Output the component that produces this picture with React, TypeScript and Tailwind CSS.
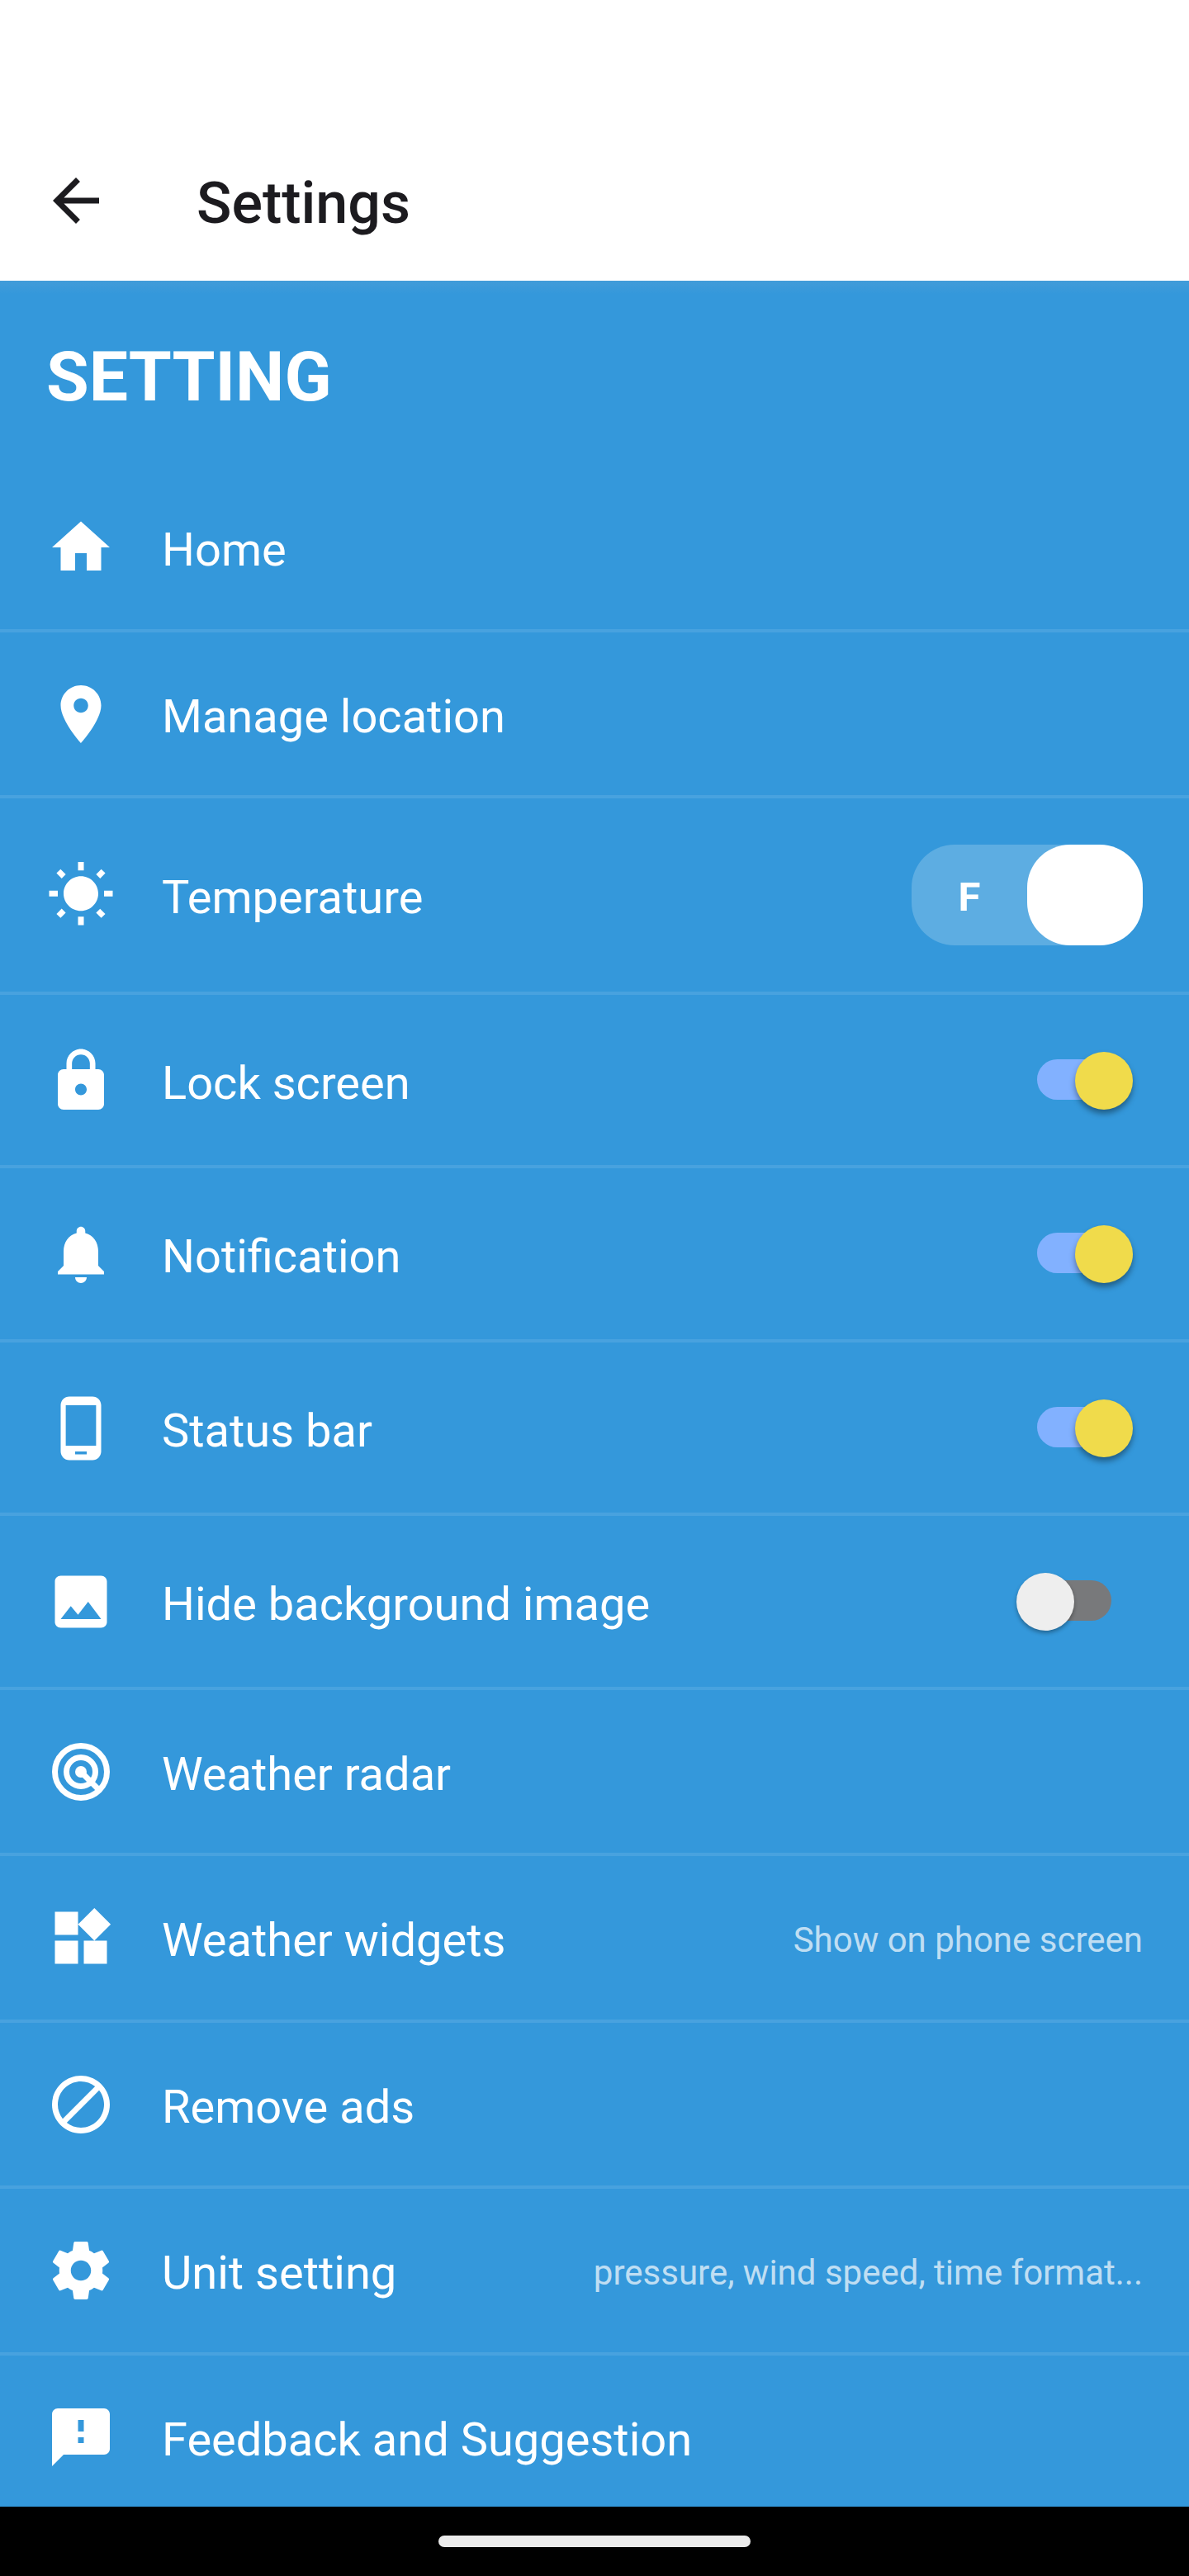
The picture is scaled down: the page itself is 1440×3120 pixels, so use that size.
import type { ReactNode } from "react";

type RowProps = {
  icon: ReactNode;
  label: string;
  height: string;
  iconTop?: string;
  children?: ReactNode;
  divider?: boolean;
};

function Glyph({ d }: { d: string }) {
  return (
    <svg viewBox="0 0 24 24" className="h-[84px] w-[84px] shrink-0 fill-white">
      <path d={d} />
    </svg>
  );
}

function Row({ icon, label, height, iconTop = "pt-[57px]", children, divider = true }: RowProps) {
  return (
    <li
      className={`flex shrink-0 items-start px-14 ${height} ${iconTop} ${
        divider ? "border-b-4 border-[#48a2df]" : ""
      }`}
    >
      {icon}
      <span className="ml-14 mt-[3px] whitespace-nowrap text-[56px] leading-[84px]">{label}</span>
      <div className="ml-auto">{children}</div>
    </li>
  );
}

function Hint({ children }: { children: ReactNode }) {
  return (
    <span className="mt-[3px] block whitespace-nowrap text-[42px] leading-[84px] text-white/70">
      {children}
    </span>
  );
}

function Toggle({ on = false }: { on?: boolean }) {
  return (
    <div
      className={`relative mr-[38px] mt-4 h-[49px] w-[90px] rounded-full ${
        on ? "bg-[#82b1ff]" : "bg-[#78797b]"
      }`}
    >
      <div
        className={`absolute top-[-9.5px] h-[70px] w-[70px] rounded-full ${
          on
            ? "left-[46px] bg-[#f0db4b] shadow-[0_5px_7px_rgba(0,0,0,0.38)]"
            : "left-[-25px] bg-[#eeeeee] shadow-[0_3px_5px_rgba(0,0,0,0.32)]"
        }`}
      />
    </div>
  );
}

function UnitToggle() {
  return (
    <div className="-mt-[19px] flex h-[122px] w-[280px] rounded-[52px] bg-[#5dade2]">
      <span className="flex-1 pt-[3px] text-center text-[49px] font-bold leading-[122px]">F</span>
      <span className="w-[140px] rounded-[52px] bg-white" />
    </div>
  );
}

const paths = {
  back: "M20 11H7.83l5.59-5.59L12 4l-8 8 8 8 1.41-1.41L7.83 13H20v-2z",
  home: "M10 20v-6h4v6h5v-8h3L12 3 2 12h3v8z",
  place:
    "M12 2C8.13 2 5 5.13 5 9c0 5.25 7 13 7 13s7-7.75 7-13c0-3.87-3.13-7-7-7zm0 9.5c-1.38 0-2.5-1.12-2.5-2.5s1.12-2.5 2.5-2.5 2.5 1.12 2.5 2.5-1.12 2.5-2.5 2.5z",
  sun: "M6.76 4.84l-1.8-1.79-1.41 1.41 1.79 1.79 1.42-1.41zM4 10.5H1v2h3v-2zm9-9.95h-2V3.5h2V.55zm7.45 3.91l-1.41-1.41-1.79 1.79 1.41 1.41 1.79-1.79zm-3.21 13.7l1.79 1.8 1.41-1.41-1.8-1.79-1.4 1.4zM20 10.5v2h3v-2h-3zm-8-5c-3.31 0-6 2.69-6 6s2.69 6 6 6 6-2.69 6-6-2.69-6-6-6zm-1 16.95h2V19.5h-2v2.95zm-7.45-3.91l1.41 1.41 1.79-1.8-1.41-1.41-1.79 1.8z",
  lock: "M18 8h-1V6c0-2.76-2.24-5-5-5S7 3.24 7 6v2H6c-1.1 0-2 .9-2 2v10c0 1.1.9 2 2 2h12c1.1 0 2-.9 2-2V10c0-1.1-.9-2-2-2zm-6 9c-1.1 0-2-.9-2-2s.9-2 2-2 2 .9 2 2-.9 2-2 2zm3.1-9H8.9V6c0-1.71 1.39-3.1 3.1-3.1 1.71 0 3.1 1.39 3.1 3.1v2z",
  bell: "M12 22c1.1 0 2-.9 2-2h-4c0 1.1.89 2 2 2zm6-6v-5c0-3.07-1.64-5.64-4.5-6.32V4c0-.83-.67-1.5-1.5-1.5s-1.5.67-1.5 1.5v.68C7.63 5.36 6 7.92 6 11v5l-2 2v1h16v-1l-2-2z",
  phone:
    "M16 1H8C6.34 1 5 2.34 5 4v16c0 1.66 1.34 3 3 3h8c1.66 0 3-1.34 3-3V4c0-1.66-1.34-3-3-3zm-2 20h-4v-1h4v1zm3.25-3H6.75V4h10.5v14z",
  image:
    "M21 19V5c0-1.1-.9-2-2-2H5c-1.1 0-2 .9-2 2v14c0 1.1.9 2 2 2h14c1.1 0 2-.9 2-2zM8.5 13.5l2.5 3.01L14.5 12l4.5 6H5l3.5-4.5z",
  widgets:
    "M13 13v8h8v-8h-8zM3 21h8v-8H3v8zM3 3v8h8V3H3zm13.66-1.31L11 7.34 16.66 13l5.66-5.66-5.66-5.65z",
  block:
    "M12 2C6.5 2 2 6.5 2 12s4.5 10 10 10 10-4.5 10-10S17.5 2 12 2zM4 12c0-4.4 3.6-8 8-8 1.8 0 3.5.6 4.9 1.7L5.7 16.9C4.6 15.5 4 13.8 4 12zm8 8c-1.8 0-3.5-.6-4.9-1.7L18.3 7.1C19.4 8.5 20 10.2 20 12c0 4.4-3.6 8-8 8z",
  gear: "M19.43 12.98c.04-.32.07-.64.07-.98s-.03-.66-.07-.98l2.11-1.65c.19-.15.24-.42.12-.64l-2-3.46c-.12-.22-.39-.3-.61-.22l-2.49 1c-.52-.4-1.08-.73-1.69-.98l-.38-2.65C14.46 2.18 14.25 2 14 2h-4c-.25 0-.46.18-.49.42l-.38 2.65c-.61.25-1.17.59-1.69.98l-2.49-1c-.23-.09-.49 0-.61.22l-2 3.46c-.13.22-.07.49.12.64l2.11 1.65c-.04.32-.07.65-.07.98s.03.66.07.98l-2.11 1.65c-.19.15-.24.42-.12.64l2 3.46c.12.22.39.3.61.22l2.49-1c.52.4 1.08.73 1.69.98l.38 2.65c.03.24.24.42.49.42h4c.25 0 .46-.18.49-.42l.38-2.65c.61-.25 1.17-.59 1.69-.98l2.49 1c.23.09.49 0 .61-.22l2-3.46c.12-.22.07-.49-.12-.64l-2.11-1.65zM12 15.5c-1.93 0-3.5-1.57-3.5-3.5s1.57-3.5 3.5-3.5 3.5 1.57 3.5 3.5-1.57 3.5-3.5 3.5z",
  feedback:
    "M20 2H4c-1.1 0-1.99.9-1.99 2L2 22l4-4h14c1.1 0 2-.9 2-2V4c0-1.1-.9-2-2-2zm-7 12h-2v-2h2v2zm0-4h-2V6h2v4z",
};

function RadarIcon() {
  return (
    <svg viewBox="0 0 24 24" className="h-[84px] w-[84px] shrink-0 fill-none stroke-white stroke-2">
      <circle cx="12" cy="12" r="9" />
      <circle cx="12" cy="12" r="5" />
      <circle cx="12" cy="12" r="2" className="fill-white stroke-none" />
      <path d="M12 12l6.4 6.4" />
    </svg>
  );
}

export default function App() {
  return (
    <div className="flex h-[3120px] w-[1440px] flex-col overflow-hidden bg-[#3498db] font-['Roboto',sans-serif] text-white">
      <header className="flex h-[340px] shrink-0 items-start bg-white pl-[50px] pt-[201px] text-[#1c1b1f]">
        <svg viewBox="0 0 24 24" className="h-[84px] w-[84px] fill-current">
          <path d={paths.back} />
        </svg>
        <h1 className="ml-[104px] mt-[3px] text-[70px] font-medium leading-[84px]">Settings</h1>
      </header>
      <main className="flex h-[2696px] shrink-0 flex-col overflow-hidden">
        <div className="h-4 shrink-0 bg-linear-to-b from-[#429cd9] to-[#3498db]" />
        <h2 className="h-[209px] shrink-0 pl-14 pt-[51px] text-[84px] font-bold leading-[100px]">SETTING</h2>
        <ul className="flex flex-col">
          <Row icon={<Glyph d={paths.home} />} label="Home" height="h-[201px]" iconTop="pt-[56px]" />
          <Row icon={<Glyph d={paths.place} />} label="Manage location" height="h-[201px]" />
          <Row icon={<Glyph d={paths.sun} />} label="Temperature" height="h-[238px]" iconTop="pt-[75px]">
            <UnitToggle />
          </Row>
          <Row icon={<Glyph d={paths.lock} />} label="Lock screen" height="h-[210px]" iconTop="pt-[62px]">
            <Toggle on />
          </Row>
          <Row icon={<Glyph d={paths.bell} />} label="Notification" height="h-[211px]" iconTop="pt-[62px]">
            <Toggle on />
          </Row>
          <Row icon={<Glyph d={paths.phone} />} label="Status bar" height="h-[210px]" iconTop="pt-[62px]">
            <Toggle on />
          </Row>
          <Row icon={<Glyph d={paths.image} />} label="Hide background image" height="h-[211px]" iconTop="pt-[62px]">
            <Toggle />
          </Row>
          <Row icon={<RadarIcon />} label="Weather radar" height="h-[201px]" />
          <Row icon={<Glyph d={paths.widgets} />} label="Weather widgets" height="h-[202px]">
            <Hint>Show on phone screen</Hint>
          </Row>
          <Row icon={<Glyph d={paths.block} />} label="Remove ads" height="h-[201px]" />
          <Row icon={<Glyph d={paths.gear} />} label="Unit setting" height="h-[202px]">
            <Hint>pressure, wind speed, time format...</Hint>
          </Row>
          <Row icon={<Glyph d={paths.feedback} />} label="Feedback and Suggestion" height="h-[183px]" divider={false} />
        </ul>
      </main>
      <footer className="flex h-[84px] shrink-0 items-center justify-center bg-black">
        <div className="h-[14px] w-[378px] rounded-full bg-[#ebebeb]" />
      </footer>
    </div>
  );
}
